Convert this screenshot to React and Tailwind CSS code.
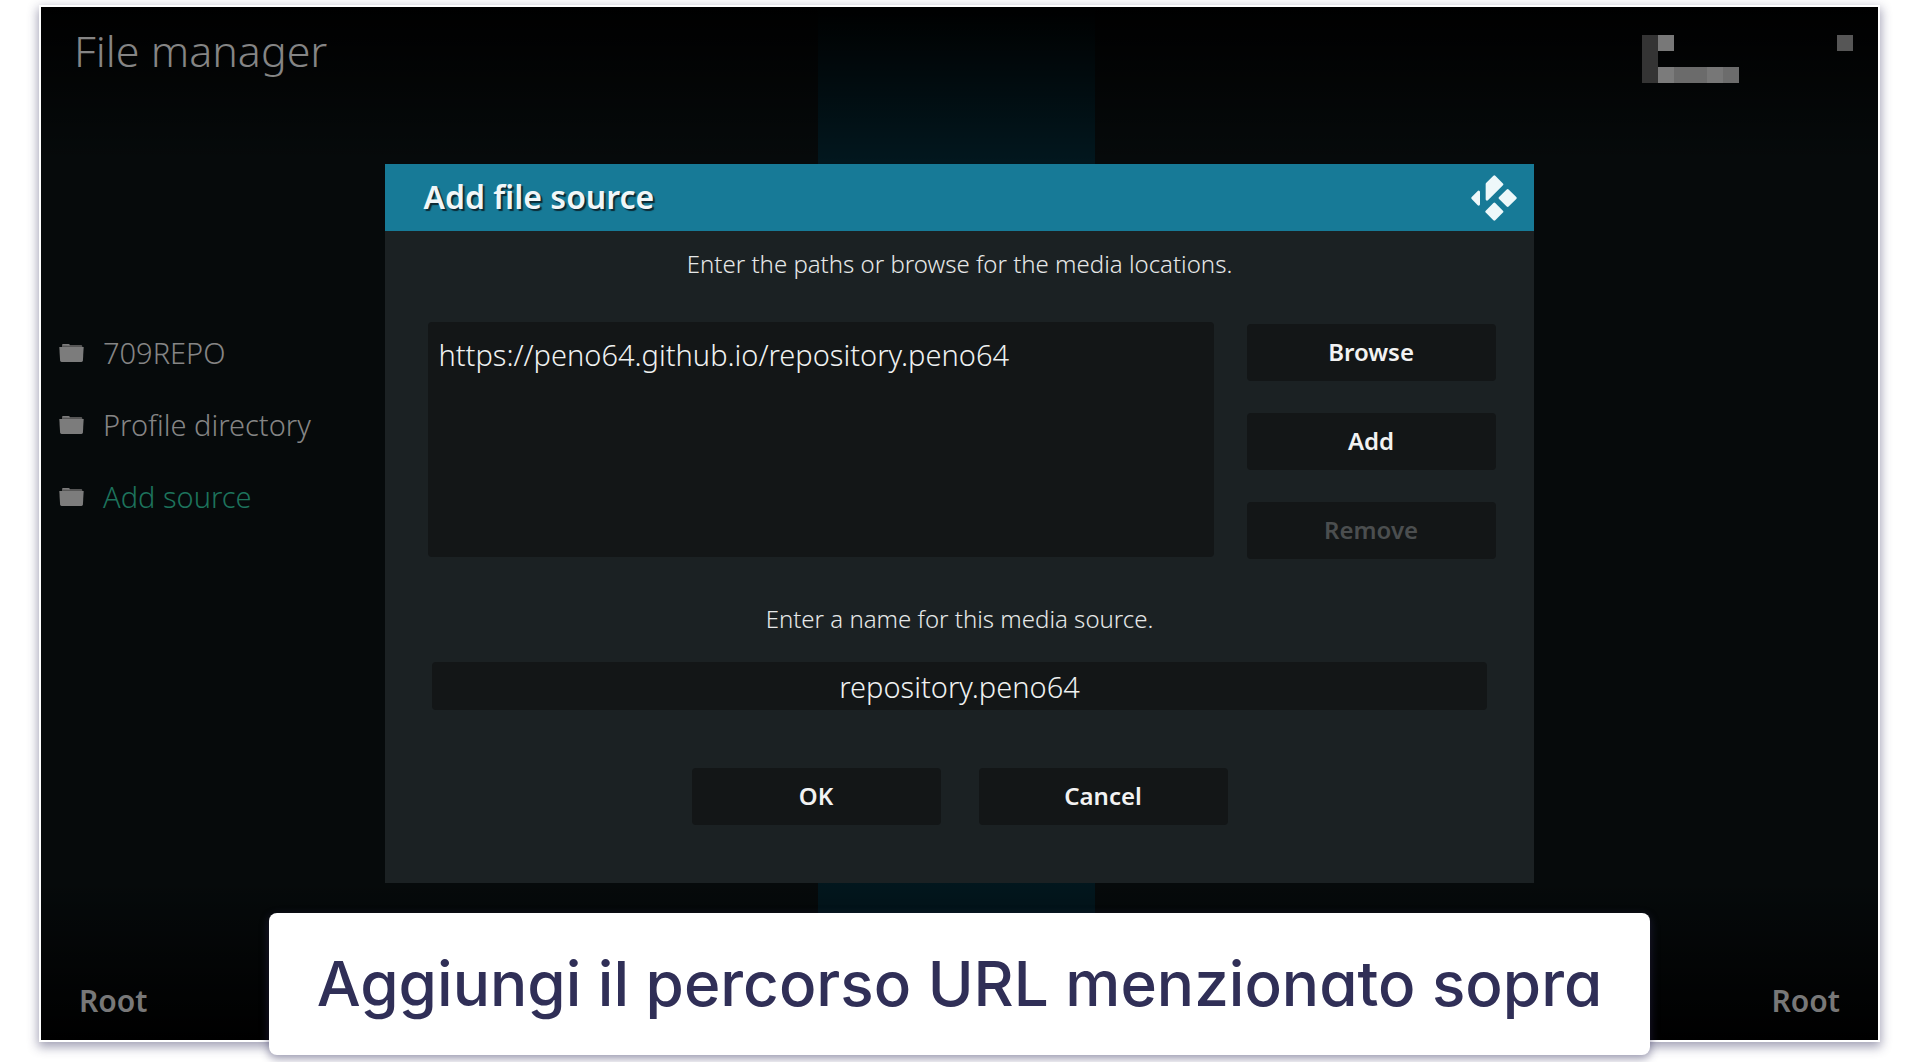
import { useState } from 'react'

const SOURCES = [
  { name: '709REPO' },
  { name: 'Profile directory' },
  { name: 'Add source', action: true },
]

// Cells of the masked clock: column, row, width, height, colour
const CLOCK_CELLS = [
  [0, 0, 1, 3, '#343434'],
  [1, 0, 1, 1, '#787878'],
  [1, 2, 1, 1, '#7b7b7b'],
  [2, 2, 2, 1, '#6b6b6b'],
  [4, 2, 1, 1, '#777777'],
  [5, 2, 1, 1, '#6c6c6c'],
  [12, 0, 1, 1, '#565656'],
]

function FolderIcon() {
  return (
    <svg viewBox="0 0 25 20" className="h-5 w-[25px] shrink-0" aria-hidden="true">
      <path d="M3 4V2.2Q3 1 4.2 1H9.3Q10.3 1 10.8 2H22Q23.3 2 23.3 3.2V4Z" fill="#565656" />
      <path d="M3.4 2.6V1.8Q3.5 1 4.2 1H9.3Q10.3 1 10.8 2.2V2.8Z" fill="#7c7c7c" />
      <path d="M.3 4H24.7L23.9 17.6Q23.8 19 22.5 19H2.5Q1.2 19 1.1 17.6Z" fill="#7c7c7c" />
    </svg>
  )
}

function KodiLogo() {
  return (
    <svg
      viewBox="0 0 138 138"
      className="size-[46px] shrink-0"
      fill="#eef8fa"
      stroke="#eef8fa"
      strokeWidth="8"
      strokeLinejoin="round"
      role="img"
      aria-label="Kodi"
    >
      <path d="M70 5L93 28L48 73V27Z" />
      <path d="M5 69L23 51V88Z" />
      <path d="M110 46L133 69L110 92L87 69Z" />
      <path d="M70 87L93 110L70 133L47 110Z" />
    </svg>
  )
}

function ClockMask() {
  return (
    <svg
      viewBox="0 0 13 3"
      preserveAspectRatio="none"
      className="h-12 w-[211px]"
      shapeRendering="crispEdges"
      aria-hidden="true"
    >
      {CLOCK_CELLS.map(([x, y, w, h, fill]) => (
        <rect key={`${x}-${y}`} x={x} y={y} width={w} height={h} fill={fill} />
      ))}
    </svg>
  )
}

function DialogButton({ children, ...props }) {
  return (
    <button
      type="button"
      className="h-[57px] w-[249px] rounded bg-[#131617] pb-0.5 text-2xl font-semibold text-[#f2f2f2] disabled:text-[#4b4e4f]"
      {...props}
    >
      {children}
    </button>
  )
}

function AddSourceDialog() {
  const [path, setPath] = useState('https://peno64.github.io/repository.peno64')
  const [name, setName] = useState('repository.peno64')

  return (
    <section role="dialog" aria-labelledby="dialog-title" className="w-[62.5%] bg-[#1b2123]">
      <header className="flex h-[67px] items-center justify-between bg-[#177a97] pr-[17px] pl-[38px]">
        <h2
          id="dialog-title"
          className="pb-0.5 text-[32px] leading-9 font-semibold text-[#f0f6f8] [text-shadow:2px_2px_1px_#0b2a34]"
        >
          Add file source
        </h2>
        <KodiLogo />
      </header>

      <form className="flex flex-col px-[38px] pt-[15px] pb-[58px]">
        <label htmlFor="paths" className="text-center text-2xl leading-9 font-light text-[#e6e8e8]">
          Enter the paths or browse for the media locations.
        </label>
        <div className="mt-10 ml-[5px] flex gap-[33px]">
          <textarea
            id="paths"
            spellCheck={false}
            value={path}
            onChange={(e) => setPath(e.target.value)}
            className="h-[235px] min-w-0 flex-1 resize-none rounded bg-[#131617] px-2.5 py-[15px] text-[29px] leading-9 font-light text-[#eff1f1] outline-none"
          />
          <div className="flex flex-col gap-8 pt-0.5">
            <DialogButton>Browse</DialogButton>
            <DialogButton>Add</DialogButton>
            <DialogButton disabled>Remove</DialogButton>
          </div>
        </div>

        <label htmlFor="name" className="mt-[42px] text-center text-2xl leading-9 font-light text-[#e6e8e8]">
          Enter a name for this media source.
        </label>
        <input
          id="name"
          type="text"
          spellCheck={false}
          value={name}
          onChange={(e) => setName(e.target.value)}
          className="mx-[9px] mt-[25px] h-12 rounded bg-[#131617] text-center text-[29px] font-light text-[#eff1f1] outline-none"
        />

        <div className="mt-[58px] flex justify-center gap-[38px]">
          <DialogButton>OK</DialogButton>
          <DialogButton>Cancel</DialogButton>
        </div>
      </form>
    </section>
  )
}

export default function App() {
  return (
    <main className="relative flex min-h-screen flex-col bg-white px-[41px] pt-[7px] pb-[22px] font-['Noto_Sans','Open_Sans',sans-serif]">
      <div className="relative flex flex-1 flex-col bg-[#060a0b] text-[#858585] shadow-[0_0_0_2px_#fff,0_4px_10px_3px_rgba(48,46,92,0.45)]">
        {/* Column divider behind the dialog */}
        <div className="absolute inset-y-0 left-[42.3%] w-[15.1%] bg-[#02171e]" />
        <div className="absolute inset-0 bg-linear-to-b from-black via-transparent via-15% to-transparent" />
        <div className="absolute inset-x-0 bottom-0 h-40 bg-linear-to-t from-black to-transparent" />

        <header className="relative flex items-start justify-between pt-7 pr-[25px] pl-[33px]">
          <h1 className="-mt-2 text-[43px] leading-12 font-light">File manager</h1>
          <ClockMask />
        </header>

        <ul className="relative mt-[234px] flex-1 pl-[18px]">
          {SOURCES.map((source) => (
            <li key={source.name}>
              <a href="#" className="flex h-[72px] items-center gap-[19px] text-[29px] font-light">
                <FolderIcon />
                <span className={source.action ? 'text-[#1d735c]' : 'text-[#858585]'}>{source.name}</span>
              </a>
            </li>
          ))}
        </ul>

        <footer className="relative flex justify-between px-[38px] pb-[19px] text-[30px] leading-10 font-semibold text-[#787878]">
          <span>Root</span>
          <span>Root</span>
        </footer>

        <div className="absolute inset-x-0 top-[157px] flex justify-center">
          <AddSourceDialog />
        </div>
      </div>

      <div className="absolute inset-x-0 bottom-[7px] flex justify-center">
        <p className="w-[72%] rounded-lg bg-white py-[35px] text-center font-['Inter','Lato',sans-serif] text-[62px] leading-[72px] font-medium whitespace-nowrap text-[#302f57] shadow-[0_3px_8px_1px_rgba(48,46,92,0.45)] [font-feature-settings:'cv11']">
          Aggiungi il percorso URL menzionato sopra
        </p>
      </div>
    </main>
  )
}
